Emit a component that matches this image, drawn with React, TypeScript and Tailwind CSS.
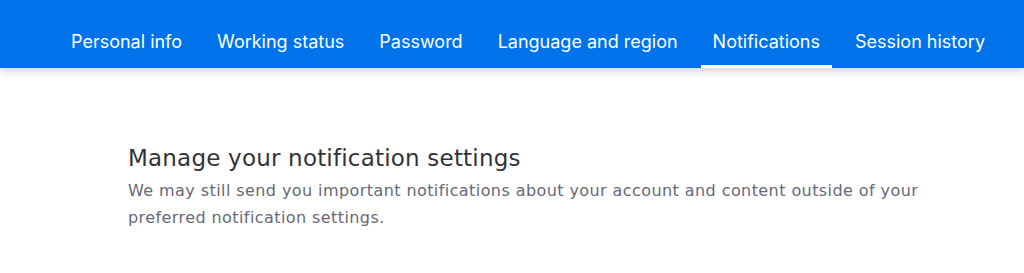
const tabs = ["Personal info", "Working status", "Password", "Language and region", "Notifications", "Session history"];

export default function App() {
  const active = "Notifications";
  return (
    <div className="w-[1024px] h-[273px] bg-white overflow-hidden" style={{ fontFamily: "Inter, 'Noto Sans', sans-serif" }}>
      <div className="h-[68px] bg-[#0073ea] shadow-[0_3px_8px_rgba(0,0,0,0.18)] relative z-10 flex items-stretch pl-[59px] gap-[11px]">
        {tabs.map(t => (
          <div key={t} className="relative flex items-center px-3 pt-[14px] text-[18px] text-white whitespace-nowrap">
            {t}
            {t === active && <span className="absolute left-0 right-0 bottom-0 h-[3px] bg-white" />}
          </div>
        ))}
      </div>
      <div className="pl-[128px] pt-[74px]">
        <h1 className="text-[23px] leading-[32px] text-[#323338] tracking-[0.2px]" style={{ fontFamily: "'DejaVu Sans', Inter, sans-serif" }}>Manage your notification settings</h1>
        <p className="mt-[3px] w-[830px] text-[16px] leading-[27px] text-[#676879] tracking-[0.42px]" style={{ fontFamily: "'DejaVu Sans', Inter, sans-serif" }}>
          We may still send you important notifications about your account and content outside of your preferred notification settings.
        </p>
      </div>
    </div>
  );
}
